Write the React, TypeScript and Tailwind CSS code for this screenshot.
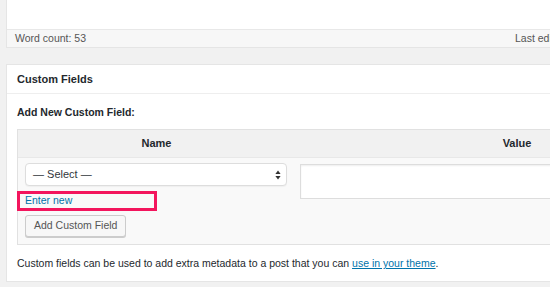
import React from 'react';

function SelectArrows() {
  return (
    <svg width="6" height="10" viewBox="0 0 6 10" className="text-[#333]">
      <path d="M3 0.5L5.6 4H0.4z" fill="currentColor" />
      <path d="M3 9.5L5.6 6H0.4z" fill="currentColor" />
    </svg>
  );
}

export default function App() {
  return (
    <div className="w-[550px] h-[287px] overflow-hidden bg-[#f1f1f1] pl-[6px] font-['Liberation_Sans',Arial,sans-serif] text-[#23282d]">
      <div className="w-[760px]">
        {/* editor box footer */}
        <div className="bg-white border-x border-b border-[#e5e5e5]">
          <div className="h-[29px]" />
          <div className="h-[18px] border-t border-[#e8e8e8] bg-[#f7f7f7] flex items-center pl-[8px] text-[10.5px] text-[#555] whitespace-nowrap">
            <span className="w-[500px]">Word count: 53</span>
            <span>Last edited by admin on June 12, 2017 at 4:21 pm</span>
          </div>
        </div>

        {/* Custom Fields metabox */}
        <div className="mt-[16px] bg-white border border-[#e5e5e5]">
          <div className="h-[29px] border-b border-[#eeeeee] flex items-center px-[10px] text-[11px] font-bold">
            Custom Fields
          </div>
          <div className="px-[10px] pb-[11px]">
            <div className="mt-[12px] h-[13px] leading-[13px] text-[10.5px] font-bold">Add New Custom Field:</div>
            <div className="mt-[10px] w-[723px] border border-[#e1e1e1]">
              <div className="grid grid-cols-[277px_1fr] h-[28px] bg-[#f1f1f1] border-b border-[#e8e8e8] text-[11px] font-bold items-center text-center">
                <div>Name</div>
                <div>Value</div>
              </div>
              <div className="grid grid-cols-[277px_1fr] bg-[#f9f9f9]">
                <div className="relative pt-[5px] px-[7px] pb-[7px]">
                  <div className="w-[262px] h-[23px] rounded-[4px] border border-[#dddddd] bg-white flex items-center justify-between pl-[7px] pr-[5px] text-[11px] text-[#32373c] shadow-[0_1px_1px_rgba(0,0,0,0.04)]">
                    <span>— Select —</span>
                    <SelectArrows />
                  </div>
                  <div className="mt-[7px] h-[14px] leading-[14px] text-[10.5px] text-[#0073aa]">Enter new</div>
                  <button className="mt-[8px] h-[22px] px-[8px] rounded-[3px] border border-[#cccccc] bg-[#f7f7f7] shadow-[0_1px_0_#cccccc] text-[10.5px] text-[#555]">
                    Add Custom Field
                  </button>
                  <div className="absolute left-[-1px] top-[33px] w-[140px] h-[20px] border-[3px] border-[#f3155d]" />
                </div>
                <div className="pt-[6px] pl-[5px]">
                  <div className="w-[430px] h-[35px] border border-[#dddddd] bg-white shadow-[inset_0_1px_2px_rgba(0,0,0,0.07)]" />
                </div>
              </div>
            </div>
            <p className="mt-[12px] h-[13px] leading-[13px] text-[10.5px] whitespace-nowrap">
              Custom fields can be used to add extra metadata to a post that you can{' '}
              <a className="text-[#0073aa] underline">use in your theme</a>.
            </p>
          </div>
        </div>
      </div>
    </div>
  );
}
